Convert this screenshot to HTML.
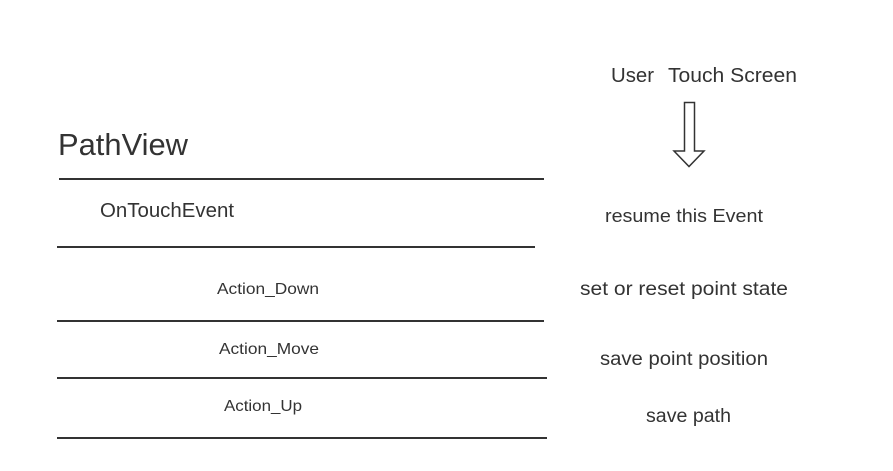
<!DOCTYPE html>
<html><head><meta charset="utf-8"><style>
html,body{margin:0;padding:0;background:#fff;}
svg{display:block;}
text{font-family:"Liberation Sans",sans-serif;fill:#333;}
</style></head><body>
<svg width="893" height="471" xmlns="http://www.w3.org/2000/svg">
<g stroke="#333" stroke-width="2">
<line x1="59" y1="179" x2="544" y2="179"/>
<line x1="57" y1="247" x2="535" y2="247"/>
<line x1="57" y1="321" x2="544" y2="321"/>
<line x1="57" y1="378" x2="547" y2="378"/>
<line x1="57" y1="438" x2="547" y2="438"/>
</g>
<path d="M684.5 102.5 H694.5 V151 H704 L689 166.5 L674 151 H684.5 Z" fill="none" stroke="#333" stroke-width="1.5"/>
<text x="58" y="155" font-size="31" textLength="130" lengthAdjust="spacingAndGlyphs">PathView</text>
<text x="611" y="82" font-size="20" textLength="43" lengthAdjust="spacingAndGlyphs">User</text>
<text x="668" y="82" font-size="20" textLength="129" lengthAdjust="spacingAndGlyphs">Touch Screen</text>
<text x="100" y="217" font-size="20" textLength="134" lengthAdjust="spacingAndGlyphs">OnTouchEvent</text>
<text x="605" y="222" font-size="18" textLength="158" lengthAdjust="spacingAndGlyphs">resume this Event</text>
<text x="217" y="294" font-size="16" textLength="102" lengthAdjust="spacingAndGlyphs">Action_Down</text>
<text x="580" y="295" font-size="19" textLength="208" lengthAdjust="spacingAndGlyphs">set or reset point state</text>
<text x="219" y="354" font-size="16" textLength="100" lengthAdjust="spacingAndGlyphs">Action_Move</text>
<text x="600" y="365" font-size="19" textLength="168" lengthAdjust="spacingAndGlyphs">save point position</text>
<text x="224" y="411" font-size="16" textLength="78" lengthAdjust="spacingAndGlyphs">Action_Up</text>
<text x="646" y="422" font-size="19" textLength="85" lengthAdjust="spacingAndGlyphs">save path</text>
</svg>
</body></html>
